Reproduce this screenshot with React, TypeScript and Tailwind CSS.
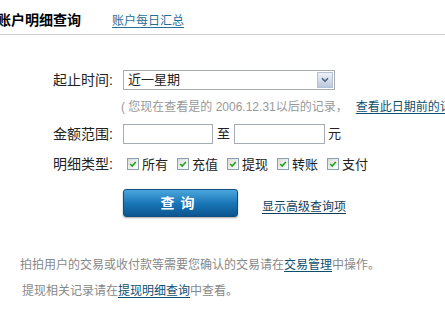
import { ChevronDown } from 'lucide-react';

const CheckBox = ({ label }: { label: string }) => (
  <label className="flex items-center">
    <span className="w-[12px] h-[12px] border border-[#8aa0b6] bg-gradient-to-br from-[#dcdcd6] to-[#ffffff] flex items-center justify-center">
      <svg viewBox="0 0 10 10" className="w-[8px] h-[8px]">
        <path d="M1.5 5 L4 7.5 L8.5 2.5" fill="none" stroke="#21a121" strokeWidth="2" />
      </svg>
    </span>
    <span className="ml-[3px] text-[13px] leading-none text-[#222]">{label}</span>
  </label>
);

const App = () => {
  const types = ['所有', '充值', '提现', '转账', '支付'];

  return (
    <div className="w-[445px] h-[320px] bg-white overflow-hidden font-['Liberation_Sans','Noto_Sans_CJK_SC',sans-serif] text-[#222]">
      {/* HEADER */}
      <div className="h-[35px] pt-[7px] flex items-center border-b border-[#cccccc] whitespace-nowrap">
        <h1 className="-ml-[3px] text-[14px] font-bold text-black">账户明细查询</h1>
        <a href="#" className="ml-[31px] text-[12px] text-[#1f6f99] underline underline-offset-2">
          账户每日汇总
        </a>
      </div>

      {/* FORM */}
      <div className="pl-[53px] mt-[35px]">
        {/* TIME */}
        <div className="flex items-center h-[20px]">
          <span className="w-[70px] text-[14px]">起止时间:</span>
          <div className="w-[212px] h-[20px] border border-[#a5acb2] flex items-center justify-between pl-[4px] pr-[1px]">
            <span className="text-[13px]">近一星期</span>
            <span className="w-[16px] h-[16px] border border-[#b4c1d6] bg-gradient-to-b from-[#eef1f7] to-[#bcc8dc] flex items-center justify-center">
              <ChevronDown className="w-[10px] h-[10px] text-[#4d6185]" strokeWidth={4} />
            </span>
          </div>
        </div>

        {/* HINT */}
        <p className="mt-[9px] ml-[68px] text-[12px] leading-[16px] text-[#999] whitespace-nowrap">
          ( 您现在查看是的 2006.12.31以后的记录，
          <a href="#" className="ml-[8px] text-[#0f4f6e] underline underline-offset-2">
            查看此日期前的记录
          </a>
        </p>

        {/* AMOUNT */}
        <div className="mt-[9px] flex items-center h-[20px]">
          <span className="w-[70px] text-[14px]">金额范围:</span>
          <input className="w-[90px] h-[20px] border border-[#a5acb2] outline-none" />
          <span className="mx-[4px] text-[13px]">至</span>
          <input className="w-[91px] h-[20px] border border-[#a5acb2] outline-none" />
          <span className="ml-[3px] text-[13px]">元</span>
        </div>

        {/* TYPES */}
        <div className="mt-[10px] flex items-center h-[20px]">
          <span className="w-[74px] text-[14px]">明细类型:</span>
          <div className="flex items-center gap-[9px]">
            {types.map((t) => (
              <CheckBox key={t} label={t} />
            ))}
          </div>
        </div>

        {/* SUBMIT */}
        <div className="mt-[15px] ml-[70px] flex items-end">
          <button className="w-[115px] h-[28px] rounded-[3px] border border-[#0d4f7f] bg-gradient-to-b from-[#4aa6dc] via-[#1a78b8] to-[#0b5590] text-white text-[14px] font-bold tracking-[6px] shadow-[0_1px_2px_rgba(0,0,0,0.35)]">
            查询
          </button>
          <a href="#" className="ml-[24px] mb-[1px] text-[12px] text-[#133e5a] underline underline-offset-2">
            显示高级查询项
          </a>
        </div>
      </div>

      {/* NOTES */}
      <div className="mt-[35px] pl-[20px] text-[12px] leading-[26px] text-[#888] whitespace-nowrap">
        <p>
          拍拍用户的交易或收付款等需要您确认的交易请在
          <a href="#" className="text-[#0f4f6e] underline underline-offset-2">交易管理</a>
          中操作。
        </p>
        <p className="pl-[2px]">
          提现相关记录请在
          <a href="#" className="text-[#0f4f6e] underline underline-offset-2">提现明细查询</a>
          中查看。
        </p>
      </div>
    </div>
  );
};

export default App;
